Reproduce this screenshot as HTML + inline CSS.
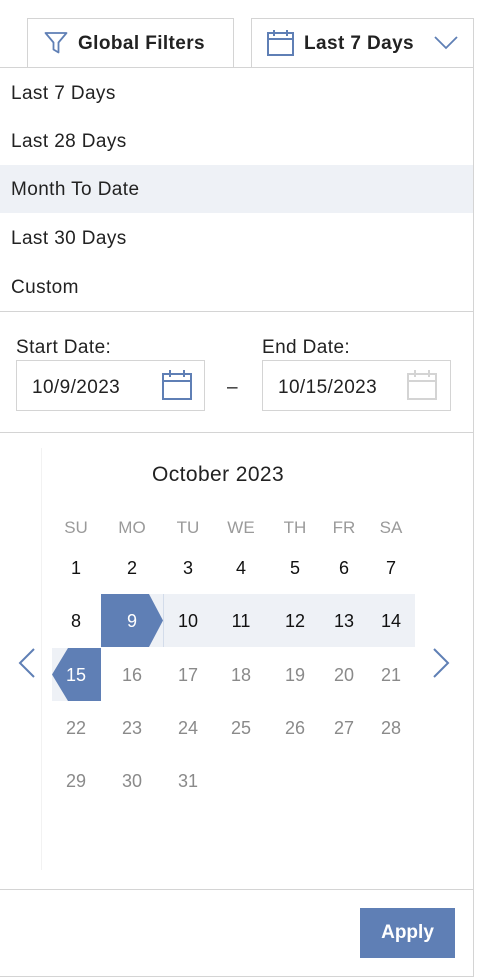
<!DOCTYPE html>
<html><head><style>
*{margin:0;padding:0;box-sizing:border-box}
body{width:478px;height:978px;background:#fff;font-family:"Liberation Sans",sans-serif;color:#222;position:relative;overflow:hidden}
.a{position:absolute}
.t{position:absolute;white-space:nowrap;letter-spacing:.4px}
.c{position:absolute;width:50px;margin-left:-25px;text-align:center;font-size:18px;line-height:20px}
</style></head><body>
<div class="a" style="left:27px;top:18px;width:207px;height:50px;border:1px solid #d4d4d4;border-bottom:none"></div>
<svg class="a" style="left:44px;top:31px" width="24" height="24" viewBox="0 0 24 24"><path d="M1.5 2h21l-8 9.5v10l-5-3v-7z" fill="none" stroke="#5f7fb5" stroke-width="1.8" stroke-linejoin="round"/></svg>
<div class="t" style="left:78px;top:33px;font-size:19px;font-weight:bold;color:#222">Global Filters</div>
<div class="a" style="left:251px;top:18px;width:223px;height:50px;border:1px solid #d4d4d4;border-bottom:none"></div>
<svg class="a" style="left:267px;top:29px" width="27" height="28" viewBox="0 0 27 28"><rect x="1" y="4" width="25" height="22" fill="none" stroke="#5f7fb5" stroke-width="2"/><line x1="1" y1="10" x2="26" y2="10" stroke="#5f7fb5" stroke-width="2"/><line x1="7" y1="1" x2="7" y2="7" stroke="#5f7fb5" stroke-width="2"/><line x1="20" y1="1" x2="20" y2="7" stroke="#5f7fb5" stroke-width="2"/></svg>
<div class="t" style="left:304px;top:33px;font-size:19px;font-weight:bold">Last 7 Days</div>
<svg class="a" style="left:434px;top:36px" width="24" height="14" viewBox="0 0 24 14"><path d="M1 1l11 11L23 1" fill="none" stroke="#5f7fb5" stroke-width="1.8"/></svg>
<div class="a" style="left:0;top:67px;width:474px;height:910px;border-top:1px solid #d4d4d4;border-right:1px solid #d4d4d4;border-bottom:1px solid #d4d4d4"></div>
<div class="a" style="left:0;top:165px;width:473px;height:48px;background:#eef1f6"></div>
<div class="t" style="left:11px;top:83px;font-size:19px">Last 7 Days</div>
<div class="t" style="left:11px;top:131px;font-size:19px">Last 28 Days</div>
<div class="t" style="left:11px;top:179px;font-size:19px">Month To Date</div>
<div class="t" style="left:11px;top:228px;font-size:19px">Last 30 Days</div>
<div class="t" style="left:11px;top:277px;font-size:19px">Custom</div>
<div class="a" style="left:0;top:311px;width:473px;height:1px;background:#d4d4d4"></div>
<div class="t" style="left:16px;top:337px;font-size:19px">Start Date:</div>
<div class="t" style="left:262px;top:337px;font-size:19px">End Date:</div>
<div class="a" style="left:16px;top:360px;width:189px;height:51px;border:1px solid #d4d4d4"></div>
<div class="a" style="left:262px;top:360px;width:189px;height:51px;border:1px solid #d4d4d4"></div>
<div class="t" style="left:32px;top:377px;font-size:19px">10/9/2023</div>
<div class="t" style="left:278px;top:377px;font-size:19px">10/15/2023</div>
<div class="t" style="left:227px;top:377px;font-size:19px">–</div>
<svg class="a" style="left:162px;top:369px" width="30" height="32" viewBox="0 0 30 32"><rect x="1" y="5" width="28" height="25" fill="none" stroke="#5f7fb5" stroke-width="2"/><line x1="1" y1="12" x2="29" y2="12" stroke="#5f7fb5" stroke-width="2"/><line x1="8" y1="1" x2="8" y2="8" stroke="#5f7fb5" stroke-width="2"/><line x1="22" y1="1" x2="22" y2="8" stroke="#5f7fb5" stroke-width="2"/></svg>
<svg class="a" style="left:407px;top:369px" width="30" height="32" viewBox="0 0 30 32"><rect x="1" y="5" width="28" height="25" fill="none" stroke="#d4d4d4" stroke-width="2"/><line x1="1" y1="12" x2="29" y2="12" stroke="#d4d4d4" stroke-width="2"/><line x1="8" y1="1" x2="8" y2="8" stroke="#d4d4d4" stroke-width="2"/><line x1="22" y1="1" x2="22" y2="8" stroke="#d4d4d4" stroke-width="2"/></svg>
<div class="a" style="left:0;top:432px;width:473px;height:1px;background:#d4d4d4"></div>
<div class="a" style="left:41px;top:448px;width:1px;height:422px;background:#f2f2f2"></div>
<div class="t" style="left:152px;top:463px;font-size:21px">October 2023</div>
<div class="a" style="left:101px;top:594px;width:314px;height:53px;background:#eef1f6"></div>
<div class="a" style="left:52px;top:648px;width:49px;height:53px;background:#eef1f6"></div>
<svg class="a" style="left:101px;top:594px" width="63" height="53"><polygon points="0,0 48,0 62,26.5 48,53 0,53" fill="#5f7fb5"/><line x1="63" y1="0" x2="63" y2="53" stroke="#b8c6dd"/></svg>
<svg class="a" style="left:52px;top:648px" width="49" height="53"><polygon points="49,0 16,0 0,26.5 16,53 49,53" fill="#5f7fb5"/></svg>
<svg class="a" style="left:18px;top:648px" width="18" height="30"><path d="M16 1L2 15l14 14" fill="none" stroke="#5f7fb5" stroke-width="2"/></svg>
<svg class="a" style="left:432px;top:648px" width="18" height="30"><path d="M2 1l14 14L2 29" fill="none" stroke="#5f7fb5" stroke-width="2"/></svg>
<div id="cal"></div>
<script>
var xs=[76,132,188,241,295,344,391],ys=[518,558,611,665,718,771],h='';
['SU','MO','TU','WE','TH','FR','SA'].forEach(function(d,i){h+='<div class="c" style="left:'+xs[i]+'px;top:'+ys[0]+'px;color:#9a9a9a;font-size:17px">'+d+'</div>'});
for(var n=1;n<=31;n++){var r=Math.floor((n-1)/7)+1,i=(n-1)%7;var col=n<=14?'#111':'#8a8a8a';if(n==9||n==15)col='#fff';h+='<div class="c" style="left:'+xs[i]+'px;top:'+ys[r]+'px;color:'+col+'">'+n+'</div>'}
document.getElementById('cal').innerHTML=h;
</script>
<div class="a" style="left:0;top:889px;width:473px;height:1px;background:#d4d4d4"></div>
<div class="a" style="left:360px;top:908px;width:95px;height:50px;background:#5f7fb5;color:#fff;font-weight:bold;font-size:19px;text-align:center;line-height:50px">Apply</div>
</body></html>
